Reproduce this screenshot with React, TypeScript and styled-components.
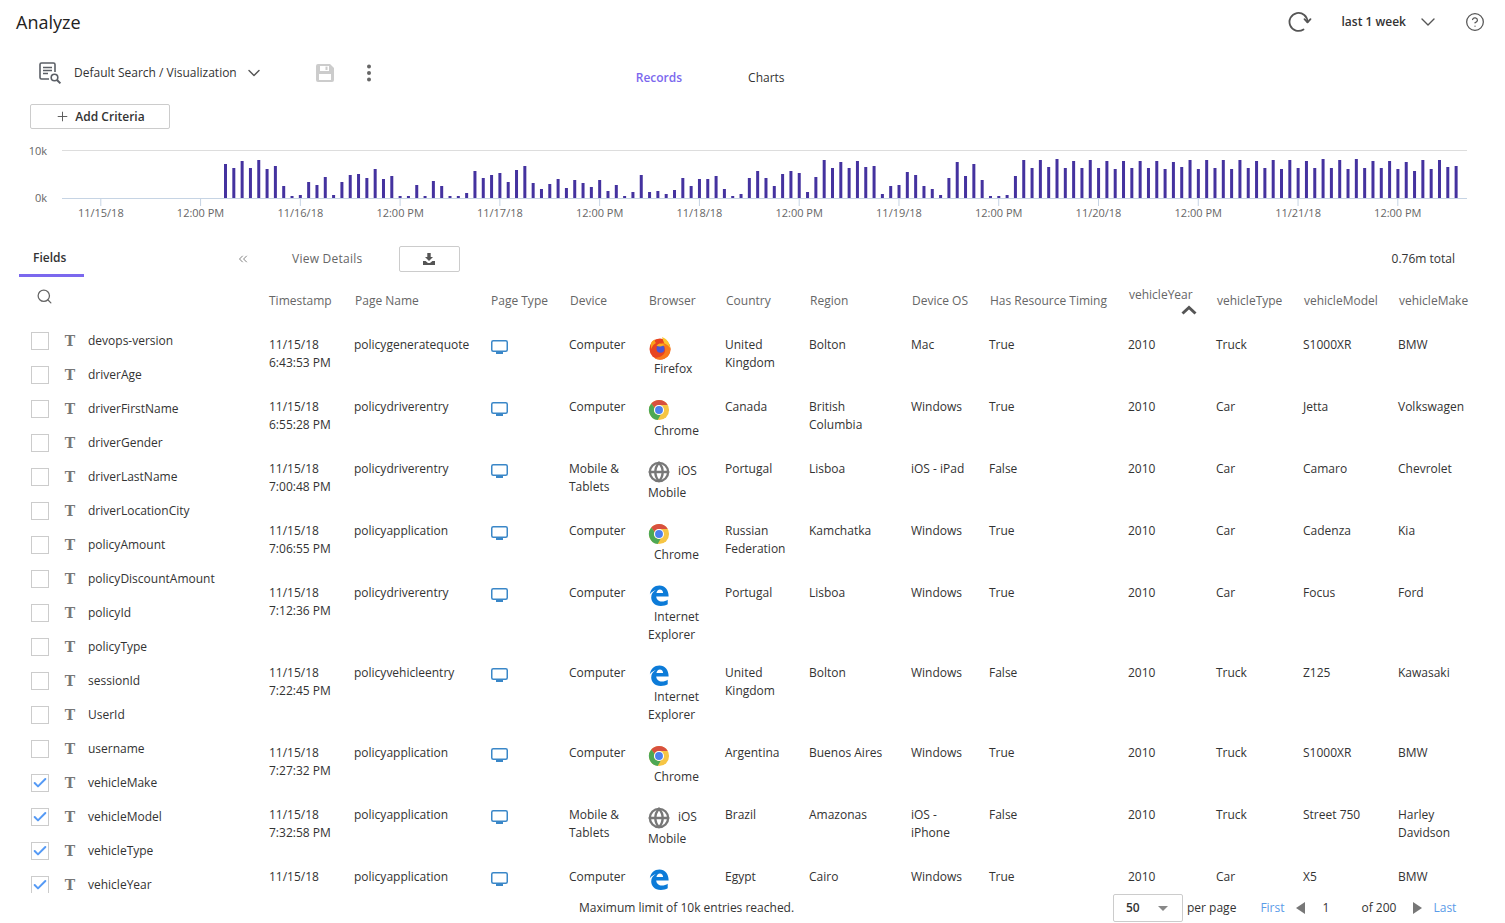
import React from "react";
import styled, { createGlobalStyle } from "styled-components";
import { Check, ChevronDown, ChevronsLeft, CircleHelp, Globe, Plus, Search } from "lucide-react";

const GlobalStyle = createGlobalStyle`
  html, body {
    margin: 0;
    padding: 0;
    background: #fff;
  }
  body {
    font-family: "Open Sans", "Liberation Sans", sans-serif;
    font-size: 12px;
    line-height: 18px;
    color: #333;
  }
`;

const Page = styled.div`
  width: 1505px;
  height: 923px;
  display: flex;
  flex-direction: column;
  overflow: hidden;
`;

const TopBar = styled.div`
  height: 44px;
  display: flex;
  align-items: center;
  padding: 0 20px 0 16px;
  flex-shrink: 0;
`;

const Title = styled.h1`
  margin: 0;
  font-size: 18px;
  font-weight: 400;
  line-height: 24px;
  color: #222;
`;

const TopRight = styled.div`
  margin-left: auto;
  display: flex;
  align-items: center;
  color: #555;
`;

const RangeLabel = styled.span`
  margin-left: 30px;
  font-weight: 600;
  color: #333;
`;

const TopChevron = styled.span`
  display: flex;
  margin: 0 25px 0 10px;
`;

const SearchRow = styled.div`
  height: 58px;
  box-sizing: border-box;
  display: flex;
  align-items: center;
  padding-left: 38px;
  flex-shrink: 0;
`;

const SearchName = styled.span`
  margin: 0 0 0 10px;
  color: #333;
`;

const SearchChevron = styled.span`
  display: flex;
  margin: 0 51px 0 7px;
  color: #555;
`;

const MoreWrap = styled.span`
  display: flex;
  margin-left: 31px;
`;

const Tabs = styled.div`
  display: flex;
  margin: 10px 0 0 264px;
  gap: 66px;
`;

const ViewTab = styled.span<{ $active?: boolean }>`
  font-weight: ${(p) => (p.$active ? 600 : 400)};
  color: ${(p) => (p.$active ? "#7b68ee" : "#333")};
`;

const CriteriaRow = styled.div`
  padding: 2px 0 0 30px;
  flex-shrink: 0;
`;

const AddButton = styled.button`
  width: 140px;
  height: 25px;
  display: flex;
  align-items: center;
  justify-content: center;
  gap: 5px;
  padding: 0;
  background: #fff;
  border: 1px solid #ccc;
  border-radius: 2px;
  font: 600 12px "Open Sans", sans-serif;
  color: #333;
  svg {
    color: #555;
  }
`;

const ChartSvg = styled.svg`
  display: block;
  margin-top: 11px;
  flex-shrink: 0;
  text {
    font-family: "Open Sans", sans-serif;
    font-size: 11px;
    fill: #666;
  }
`;

const FieldsBar = styled.div`
  height: 37px;
  margin-top: 15px;
  padding-left: 19px;
  display: flex;
  align-items: center;
  flex-shrink: 0;
`;

const FieldsTab = styled.div`
  width: 65px;
  height: 37px;
  box-sizing: border-box;
  padding: 9px 0 0 14px;
  border-bottom: 3px solid #7b68ee;
  font-weight: 600;
  color: #333;
`;

const Collapse = styled.span`
  display: flex;
  margin: 0 0 0 152px;
  color: #666;
`;

const ViewDetails = styled.span`
  margin-left: 42px;
  letter-spacing: 0.25px;
  color: #666;
`;

const DownloadButton = styled.button`
  width: 61px;
  height: 26px;
  margin: 0 0 0 36px;
  padding: 0;
  display: flex;
  align-items: center;
  justify-content: center;
  background: #fff;
  border: 1px solid #ccc;
  border-radius: 2px;
`;

const TotalLabel = styled.span`
  margin-left: 932px;
  color: #333;
`;

const Content = styled.div`
  flex: 1;
  min-height: 0;
  display: flex;
  overflow: hidden;
`;

const Sidebar = styled.div`
  width: 269px;
  flex-shrink: 0;
  box-sizing: border-box;
`;

const SidebarSearch = styled.div`
  height: 47px;
  padding: 11px 0 0 36px;
  box-sizing: border-box;
  color: #666;
`;

const FieldRow = styled.div`
  height: 34px;
  display: flex;
  align-items: center;
  padding-left: 31px;
`;

const CheckBox = styled.span`
  width: 18px;
  height: 18px;
  box-sizing: border-box;
  border: 1px solid #ccc;
  display: flex;
  align-items: center;
  justify-content: center;
  color: #559af5;
`;

const TypeGlyph = styled.span`
  width: 18px;
  margin: 0 9px 0 12px;
  text-align: center;
  font: 700 14px "DejaVu Serif", "Liberation Serif", serif;
  color: #777;
`;

const FieldName = styled.span`
  color: #333;
`;

const Table = styled.table`
  width: 1236px;
  table-layout: fixed;
  border-collapse: collapse;
  flex-shrink: 0;
  align-self: flex-start;
`;

const HeadCell = styled.th<{ $sorted?: boolean }>`
  height: 59px;
  box-sizing: border-box;
  padding: ${(p) => (p.$sorted ? "9px" : "15px")} 0 0 1px;
  vertical-align: top;
  text-align: left;
  font-weight: 400;
  white-space: nowrap;
  color: #666;
  &:nth-child(1),
  &:nth-child(3) {
    padding-left: 0;
  }
`;

const SortMark = styled.div`
  display: flex;
  justify-content: flex-end;
  width: 68px;
  height: 10px;
  margin-top: 1px;
`;

const Cell = styled.td`
  padding: 0 15px 20px 0;
  vertical-align: top;
  color: #333;
  &:last-child {
    padding-right: 25px;
  }
`;

const IconCell = styled(Cell)`
  padding-top: 4px;
  svg {
    display: block;
  }
`;

const BrowserIcon = styled.span`
  display: inline-flex;
  width: 24px;
  height: 24px;
  vertical-align: middle;
  align-items: center;
  color: #777;
`;

const BrowserName = styled.span`
  margin-left: 6px;
`;

const Footer = styled.div`
  height: 30px;
  flex-shrink: 0;
  box-sizing: border-box;
  padding: 0 0 1px 579px;
  display: flex;
  align-items: center;
  background: #fff;
  color: #333;
`;

const LimitNote = styled.span`
  width: 534px;
`;

const PageSize = styled.div`
  width: 70px;
  height: 28px;
  margin-top: 1px;
  box-sizing: border-box;
  padding: 0 14px 0 12px;
  display: flex;
  align-items: center;
  justify-content: space-between;
  border: 1px solid #ccc;
  border-radius: 2px;
  font-weight: 600;
`;

const Caret = styled.span`
  width: 0;
  height: 0;
  border-left: 5px solid transparent;
  border-right: 5px solid transparent;
  border-top: 5px solid #888;
`;

const PerPage = styled.span`
  margin: 0 24px 0 4px;
`;

const PageLink = styled.a`
  color: #5a9be8;
`;

const Arrow = styled.span<{ $dir: "left" | "right" }>`
  width: 0;
  height: 0;
  border-top: 6px solid transparent;
  border-bottom: 6px solid transparent;
  ${(p) => (p.$dir === "left" ? "border-right: 9px solid #777;" : "border-left: 9px solid #777;")}
`;

const PrevArrow = styled(Arrow)`
  margin: 0 18px 0 11px;
`;

const NextArrow = styled(Arrow)`
  margin: 0 11px 0 17px;
`;

const PageNumber = styled.span`
  width: 39px;
`;

const barHeights = [
  34, 30, 37, 30, 38, 29, 32, 12, 2, 3, 16, 13, 21, 3, 16, 23, 24, 20, 29, 19, 22, 2, 2, 13, 2, 17, 12, 2, 2, 5,
  27, 20, 23, 25, 16, 28, 32, 15, 9, 14, 19, 10, 18, 15, 11, 18, 7, 13, 2, 6, 23, 6, 7, 4, 8, 20, 12, 19, 19, 22,
  9, 2, 4, 20, 27, 20, 12, 24, 27, 25, 6, 21, 38, 30, 36, 30, 37, 31, 32, 4, 12, 13, 26, 23, 12, 9, 3, 20, 36, 22,
  34, 18, 2, 2, 3, 22, 38, 30, 38, 31, 39, 30, 37, 30, 38, 30, 37, 29, 37, 30, 37, 30, 37, 29, 36, 31, 38, 29, 38,
  30, 38, 29, 38, 30, 37, 30, 38, 29, 38, 30, 37, 30, 39, 30, 38, 29, 39, 30, 37, 30, 37, 29, 36, 27, 38, 29, 38,
  31, 32,
];

const tickLabels = [
  "11/15/18", "12:00 PM", "11/16/18", "12:00 PM", "11/17/18", "12:00 PM", "11/18/18", "12:00 PM",
  "11/19/18", "12:00 PM", "11/20/18", "12:00 PM", "11/21/18", "12:00 PM",
];

const fields = [
  "devops-version", "driverAge", "driverFirstName", "driverGender", "driverLastName", "driverLocationCity",
  "policyAmount", "policyDiscountAmount", "policyId", "policyType", "sessionId", "UserId", "username",
  "vehicleMake", "vehicleModel", "vehicleType", "vehicleYear",
];
const checkedFields = ["vehicleMake", "vehicleModel", "vehicleType", "vehicleYear"];

const columns = [
  { title: "Timestamp", width: 85 },
  { title: "Page Name", width: 137 },
  { title: "Page Type", width: 78 },
  { title: "Device", width: 79 },
  { title: "Browser", width: 77 },
  { title: "Country", width: 84 },
  { title: "Region", width: 102 },
  { title: "Device OS", width: 78 },
  { title: "Has Resource Timing", width: 139 },
  { title: "vehicleYear", width: 88, sorted: true },
  { title: "vehicleType", width: 87 },
  { title: "vehicleModel", width: 95 },
  { title: "vehicleMake", width: 107 },
];

type Browser = "Firefox" | "Chrome" | "iOS Mobile" | "Internet Explorer";

type Row = {
  time: string;
  page: string;
  device: string;
  browser: Browser;
  browserHidden?: boolean;
  country: string;
  region: string;
  os: string;
  timing: string;
  type: string;
  model: string;
  make: string;
};

const rows: Row[] = [
  { time: "11/15/18 6:43:53 PM", page: "policygeneratequote", device: "Computer", browser: "Firefox", country: "United Kingdom", region: "Bolton", os: "Mac", timing: "True", type: "Truck", model: "S1000XR", make: "BMW" },
  { time: "11/15/18 6:55:28 PM", page: "policydriverentry", device: "Computer", browser: "Chrome", country: "Canada", region: "British Columbia", os: "Windows", timing: "True", type: "Car", model: "Jetta", make: "Volkswagen" },
  { time: "11/15/18 7:00:48 PM", page: "policydriverentry", device: "Mobile & Tablets", browser: "iOS Mobile", country: "Portugal", region: "Lisboa", os: "iOS - iPad", timing: "False", type: "Car", model: "Camaro", make: "Chevrolet" },
  { time: "11/15/18 7:06:55 PM", page: "policyapplication", device: "Computer", browser: "Chrome", country: "Russian Federation", region: "Kamchatka", os: "Windows", timing: "True", type: "Car", model: "Cadenza", make: "Kia" },
  { time: "11/15/18 7:12:36 PM", page: "policydriverentry", device: "Computer", browser: "Internet Explorer", country: "Portugal", region: "Lisboa", os: "Windows", timing: "True", type: "Car", model: "Focus", make: "Ford" },
  { time: "11/15/18 7:22:45 PM", page: "policyvehicleentry", device: "Computer", browser: "Internet Explorer", country: "United Kingdom", region: "Bolton", os: "Windows", timing: "False", type: "Truck", model: "Z125", make: "Kawasaki" },
  { time: "11/15/18 7:27:32 PM", page: "policyapplication", device: "Computer", browser: "Chrome", country: "Argentina", region: "Buenos Aires", os: "Windows", timing: "True", type: "Truck", model: "S1000XR", make: "BMW" },
  { time: "11/15/18 7:32:58 PM", page: "policyapplication", device: "Mobile & Tablets", browser: "iOS Mobile", country: "Brazil", region: "Amazonas", os: "iOS - iPhone", timing: "False", type: "Truck", model: "Street 750", make: "Harley Davidson" },
  { time: "11/15/18", page: "policyapplication", device: "Computer", browser: "Internet Explorer", browserHidden: true, country: "Egypt", region: "Cairo", os: "Windows", timing: "True", type: "Car", model: "X5", make: "BMW" },
];

const Chart = () => (
  <ChartSvg width={1505} height={85} viewBox="0 140 1505 85">
    <text x={47} y={155} textAnchor="end">10k</text>
    <text x={47} y={202} textAnchor="end">0k</text>
    <rect x={62} y={150} width={1405} height={1} fill="#ddd" />
    {barHeights.map((h, i) => (
      <rect key={i} x={224 + i * 8.315} y={198 - h} width={3} height={h} fill="#44329f" />
    ))}
    <rect x={62} y={198} width={1405} height={1} fill="#c6d4e4" />
    {tickLabels.map((label, i) => {
      const x = 100.3 + i * 99.77;
      return (
        <g key={i}>
          <rect x={x} y={198} width={1} height={8} fill="#c6d4e4" />
          <text x={x + 0.5} y={217} textAnchor="middle">{label}</text>
        </g>
      );
    })}
  </ChartSvg>
);

const RefreshIcon = () => (
  <svg width="24" height="24" viewBox="0 0 24 24" fill="none" stroke="#555" strokeWidth="1.8">
    <path d="M15.5 19.4A9 9 0 1 1 19.5 12" strokeLinecap="round" />
    <path d="M16.5 9.2l3 3.2 3-3.2" strokeLinecap="round" strokeLinejoin="round" />
  </svg>
);

const SortUpIcon = () => (
  <svg width="16" height="10" viewBox="0 0 16 10" fill="none" stroke="#555" strokeWidth="3">
    <path d="M1.5 8.5L8 2.5l6.5 6" />
  </svg>
);

const SearchDocIcon = () => (
  <svg width="26" height="24" viewBox="0 0 26 24" fill="none" stroke="#5b5f66" strokeWidth="1.6">
    <path d="M11 18H3.5A1.5 1.5 0 0 1 2 16.500v-13A1.500 1.500 0 0 1 3.500 2h12A1.500 1.500 0 0 1 17 3.500V11" />
    <path d="M5 6.500h9M5 9.500h9M5 12.500h5" />
    <circle cx="16.500" cy="16.500" r="3.300" />
    <path d="M19 19l3.400 3.400" strokeWidth="2" />
  </svg>
);

const SaveIcon = () => (
  <svg width="20" height="20" viewBox="0 0 20 20">
    <path
      fillRule="evenodd"
      fill="#ccc"
      d="M3 1h12l4 4v12a2 2 0 0 1-2 2H3a2 2 0 0 1-2-2V3a2 2 0 0 1 2-2Zm2 2v5h9V3H5Zm-1 8v6h12v-6H4Z"
    />
    <rect x="10.500" y="3.600" width="2" height="3.400" fill="#ccc" />
  </svg>
);

const MoreIcon = () => (
  <svg width="6" height="18" viewBox="0 0 6 18" fill="#666">
    <circle cx="3" cy="2.500" r="2" />
    <circle cx="3" cy="9" r="2" />
    <circle cx="3" cy="15.500" r="2" />
  </svg>
);

const DownloadIcon = () => (
  <svg width="12" height="12" viewBox="0 0 12 12" fill="#555">
    <path d="M4.300 0h3.400v4H10L6 8 2 4h2.300V0Z" />
    <path d="M0 8h2.600L5 10h2l2.400-2H12v4H0V8Z" />
  </svg>
);

const MonitorIcon = () => (
  <svg width="17" height="15" viewBox="0 0 17 15">
    <rect x="0.750" y="0.750" width="15.500" height="10.500" rx="1.500" fill="none" stroke="#3a87c8" strokeWidth="1.500" />
    <rect x="5" y="12" width="7" height="2" fill="#3a87c8" />
  </svg>
);

const FirefoxIcon = () => (
  <svg width="24" height="24" viewBox="0 0 24 24">
    <circle cx="12" cy="13" r="10.500" fill="#e8441f" />
    <path d="M22.500 13A10.500 10.500 0 0 1 6 21.800C12 22 18 19 17 13c-.5-3-2-5-4-6 3-1 8 0 9.500 6Z" fill="#f9791c" />
    <path d="M14 1c4 1.500 8 5 8.500 12-1-2.500-3-4.500-6-5.500C15.500 5.500 14.500 3 14 1Z" fill="#fcc72e" />
    <path d="M3 7c1-2 2.500-3 4-3.500C6.500 5 7 6 8 7 6 8 4 10 3.500 13 3 11 2.500 9 3 7Z" fill="#f9a11b" />
    <circle cx="12.500" cy="12.800" r="4" fill="#4a55d4" />
    <path d="M8.500 9.500c2.500-3 6.500-2.500 8.500 0-1.500-.3-2.500 .2-3.500 .7-1.500 .7-3.500 .5-5-.7Z" fill="#fbb01f" />
  </svg>
);

const ChromeIcon = () => (
  <svg width="22" height="22" viewBox="0 0 24 24">
    <circle cx="12" cy="12" r="11" fill="#f6c544" />
    <path d="M12 1a11 11 0 0 1 9.530 5.500H12a5.500 5.500 0 0 0-4.950 3.100L3.600 4.900A11 11 0 0 1 12 1Z" fill="#d8503f" />
    <path d="M3.600 4.900A11 11 0 0 0 10.600 22.900l3.400-5.900a5.500 5.500 0 0 1-6.900-7.400Z" fill="#4da854" />
    <circle cx="12" cy="12" r="5.500" fill="#fff" />
    <circle cx="12" cy="12" r="4.300" fill="#4c80ee" />
  </svg>
);

const EdgeIcon = () => (
  <svg width="22" height="23" viewBox="0 1 24 25">
    <path
      fillRule="evenodd"
      fill="#0c7bd8"
      d="M2 11C3 5 7 1.500 12.500 1.500 18.500 1.500 22.500 6 22.500 13.500H9C9.300 17 12 19 15 19c2.500 0 5-.8 6.500-2v5c-2 1.200-4.500 1.800-7.500 1.800C7 23.800 3.500 19 3.500 14.500c0-3.500 2-6.200 5-8C6 7.300 3.500 9 2 11ZM9.200 9.800h7.300c0-2.500-1.500-4-3.500-4-2 0-3.500 1.600-3.800 4Z"
    />
  </svg>
);

const browserIcon = (name: Browser) => {
  if (name === "Firefox") return <FirefoxIcon />;
  if (name === "Chrome") return <ChromeIcon />;
  if (name === "iOS Mobile") return <Globe size={22} strokeWidth={2.6} />;
  return <EdgeIcon />;
};

export default function App() {
  return (
    <Page>
      <GlobalStyle />
      <TopBar>
        <Title>Analyze</Title>
        <TopRight>
          <RefreshIcon />
          <RangeLabel>last 1 week</RangeLabel>
          <TopChevron>
            <ChevronDown size={24} strokeWidth={1.4} />
          </TopChevron>
          <CircleHelp size={20} strokeWidth={1.5} />
        </TopRight>
      </TopBar>

      <SearchRow>
        <SearchDocIcon />
        <SearchName>Default Search / Visualization</SearchName>
        <SearchChevron>
          <ChevronDown size={20} strokeWidth={1.7} />
        </SearchChevron>
        <SaveIcon />
        <MoreWrap>
          <MoreIcon />
        </MoreWrap>
        <Tabs>
          <ViewTab $active>Records</ViewTab>
          <ViewTab>Charts</ViewTab>
        </Tabs>
      </SearchRow>

      <CriteriaRow>
        <AddButton>
          <Plus size={15} strokeWidth={1.5} />
          Add Criteria
        </AddButton>
      </CriteriaRow>

      <Chart />

      <FieldsBar>
        <FieldsTab>Fields</FieldsTab>
        <Collapse>
          <ChevronsLeft size={14} strokeWidth={1.4} />
        </Collapse>
        <ViewDetails>View Details</ViewDetails>
        <DownloadButton>
          <DownloadIcon />
        </DownloadButton>
        <TotalLabel>0.76m total</TotalLabel>
      </FieldsBar>

      <Content>
        <Sidebar>
          <SidebarSearch>
            <Search size={17} strokeWidth={1.8} />
          </SidebarSearch>
          {fields.map((name) => (
            <FieldRow key={name}>
              <CheckBox>{checkedFields.includes(name) && <Check size={16} strokeWidth={3} />}</CheckBox>
              <TypeGlyph>T</TypeGlyph>
              <FieldName>{name}</FieldName>
            </FieldRow>
          ))}
        </Sidebar>
        <Table>
          <colgroup>
            {columns.map((c) => (
              <col key={c.title} width={c.width} />
            ))}
          </colgroup>
          <thead>
            <tr>
              {columns.map((c) => (
                <HeadCell key={c.title} $sorted={c.sorted}>
                  {c.title}
                  {c.sorted && (
                    <SortMark>
                      <SortUpIcon />
                    </SortMark>
                  )}
                </HeadCell>
              ))}
            </tr>
          </thead>
          <tbody>
            {rows.map((r, i) => (
              <tr key={i}>
                <Cell>{r.time}</Cell>
                <Cell>{r.page}</Cell>
                <IconCell>
                  <MonitorIcon />
                </IconCell>
                <Cell>{r.device}</Cell>
                <Cell>
                  <BrowserIcon>{browserIcon(r.browser)}</BrowserIcon>
                  {!r.browserHidden && <BrowserName>{r.browser}</BrowserName>}
                </Cell>
                <Cell>{r.country}</Cell>
                <Cell>{r.region}</Cell>
                <Cell>{r.os}</Cell>
                <Cell>{r.timing}</Cell>
                <Cell>2010</Cell>
                <Cell>{r.type}</Cell>
                <Cell>{r.model}</Cell>
                <Cell>{r.make}</Cell>
              </tr>
            ))}
          </tbody>
        </Table>
      </Content>

      <Footer>
        <LimitNote>Maximum limit of 10k entries reached.</LimitNote>
        <PageSize>
          50
          <Caret />
        </PageSize>
        <PerPage>per page</PerPage>
        <PageLink>First</PageLink>
        <PrevArrow $dir="left" />
        <PageNumber>1</PageNumber>
        <span>of 200</span>
        <NextArrow $dir="right" />
        <PageLink>Last</PageLink>
      </Footer>
    </Page>
  );
}
